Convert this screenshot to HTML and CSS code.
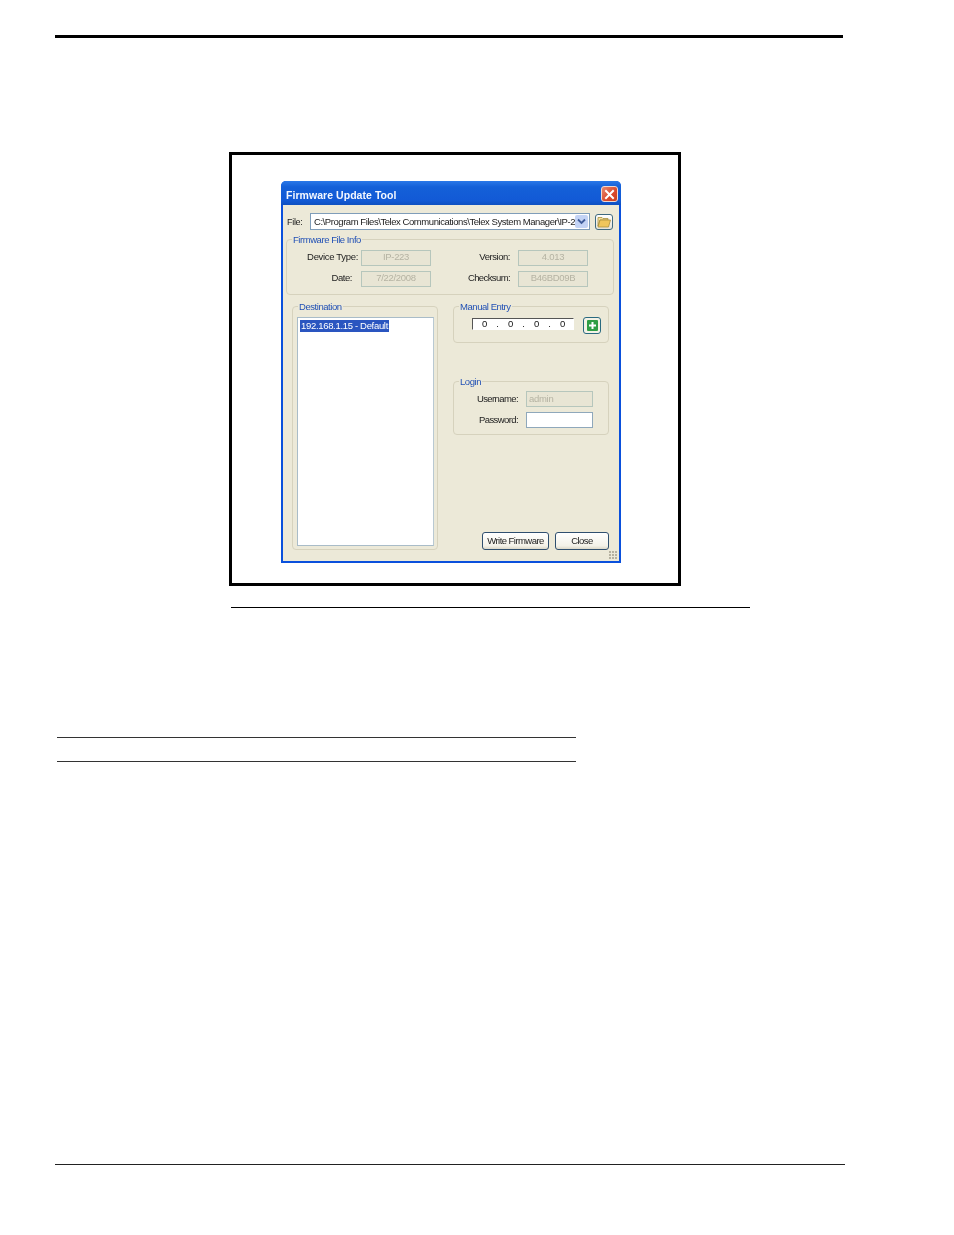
FILE: index.html
```html
<!DOCTYPE html>
<html lang="en">
<head>
<meta charset="utf-8">
<title>Firmware Update Tool</title>
<link rel="stylesheet" href="styles.css">
</head>
<body>
<div class="page">
  <hr class="rule-top">
  <div class="frame">
    <div class="dialog">
      <div class="titlebar">
        <span class="title">Firmware Update Tool</span>
        <span class="close-x">
          <svg width="17" height="17" viewBox="0 0 17 17"><path d="M5 5l7 7M12 5l-7 7" stroke="#fff" stroke-width="2" stroke-linecap="square"/></svg>
        </span>
      </div>
      <div class="body">
        <div class="file-row">
          <span class="file-label">File:</span>
          <div class="combo">
            <span class="combo-text">C:\Program Files\Telex Communications\Telex System Manager\IP-2</span>
            <span class="combo-btn">
              <svg width="9" height="7" viewBox="0 0 9 7"><path d="M1 1.500l3.500 3.500 3.500-3.500" fill="none" stroke="#3f5c9a" stroke-width="1.800"/></svg>
            </span>
          </div>
          <span class="folder-btn">
            <svg width="14" height="12" viewBox="0 0 14 12"><path d="M1 3V1.500h4l1 1h5V4H3L1 10z" fill="#f3e2a0" stroke="#a98f3e" stroke-width=".8"/><path d="M1 11l2-7h10.500l-2 7z" fill="#efc65c" stroke="#a98f3e" stroke-width=".8"/></svg>
          </span>
        </div>
        <div class="group info">
          <span class="legend">Firmware File Info</span>
          <div class="info-row">
            <span class="lbl lbl-type">Device Type:</span><span class="field">IP-223</span>
            <span class="lbl lbl-ver">Version:</span><span class="field">4.013</span>
          </div>
          <div class="info-row info-row-2">
            <span class="lbl lbl-date">Date:</span><span class="field">7/22/2008</span>
            <span class="lbl lbl-sum">Checksum:</span><span class="field">B46BD09B</span>
          </div>
        </div>
        <div class="lower">
          <div class="group dest">
            <span class="legend">Destination</span>
            <div class="listbox"><span class="selected">192.168.1.15 - Default</span></div>
          </div>
          <div class="side">
            <div class="group manual">
              <span class="legend">Manual Entry</span>
              <div class="ip-row">
                <div class="ip"><span>0</span><i>.</i><span>0</span><i>.</i><span>0</span><i>.</i><span>0</span></div>
                <span class="plus-btn">
                  <svg width="11" height="11" viewBox="0 0 11 11"><rect width="11" height="11" rx="1" fill="#2f9e44"/><path d="M5.500 2v7M2 5.500h7" stroke="#fff" stroke-width="2"/></svg>
                </span>
              </div>
            </div>
            <div class="group login">
              <span class="legend">Login</span>
              <div class="login-row"><span class="lbl">Username:</span><span class="login-field disabled">admin</span></div>
              <div class="login-row"><span class="lbl">Password:</span><span class="login-field"></span></div>
            </div>
            <div class="actions">
              <span class="btn btn-write">Write Firmware</span>
              <span class="btn btn-close">Close</span>
            </div>
          </div>
        </div>
        <span class="grip"></span>
      </div>
    </div>
  </div>
  <hr class="rule-fig">
  <hr class="rule-table rule-t1">
  <hr class="rule-table rule-t2">
  <hr class="rule-bottom">
</div>
</body>
</html>
```
FILE: styles.css
```css
* { box-sizing: border-box; }
html, body { margin: 0; padding: 0; background: #fff; }
body { font-family: "Liberation Sans", Arial, sans-serif; }
.page { width: 954px; height: 1235px; padding-top: 35px; overflow: hidden; }
hr { display: block; border: 0; margin: 0; background: #000; }
.rule-top { height: 3px; width: 788px; margin-left: 55px; }
.frame {
  width: 452px; height: 434px; margin: 114px 0 0 229px;
  border: 3px solid #000; padding: 26px 0 0 49px;
}
.rule-fig { height: 1px; width: 519px; margin: 21px 0 0 231px; }
.rule-table { height: 1px; width: 519px; margin-left: 57px; background: #333; }
.rule-t1 { margin-top: 129px; }
.rule-t2 { margin-top: 23px; }
.rule-bottom { height: 1px; width: 790px; margin: 402px 0 0 55px; background: #222; }

.dialog {
  width: 340px; height: 382px; display: flex; flex-direction: column;
  border-radius: 5px 5px 0 0; background: #0a50dc;
  padding: 0 2px 2px; filter: blur(.35px);
  font-size: 9.500px; letter-spacing: -.3px; color: #222;
}
.titlebar {
  height: 24px; flex: none; display: flex; align-items: center; justify-content: space-between;
  padding: 3px 0 0 5px; margin: 0 -2px;
  background: linear-gradient(#2a78e8, #1460d8 25%, #125ad6 80%, #0e50c0);
  border-radius: 5px 5px 0 0;
}
.title { color: #f4f8ff; font-size: 10.500px; font-weight: 700; letter-spacing: .05px; }
.close-x {
  width: 17px; height: 16px; border: 1px solid #f0d8d0; border-radius: 3px; margin: -1px 3px 0 0;
  background: linear-gradient(135deg, #e88a70, #d9482c 60%, #c8401f);
  display: flex; align-items: center; justify-content: center;
}
.close-x svg { margin: -1px; flex: none; }
.body { flex: 1; position: relative; background: #ece9d8; padding: 8px 0 0 3px; }

.file-row { display: flex; align-items: center; height: 17px; }
.file-label { width: 22px; padding-left: 1px; font-size: 9px; }
.combo {
  width: 280px; height: 17px; margin-left: 2px; background: #fff; border: 1px solid #7f9db9;
  display: flex; align-items: center; justify-content: space-between; padding: 0 0 0 3px;
}
.combo-text { font-size: 9.500px; letter-spacing: -.44px; white-space: nowrap; }
.combo-btn {
  width: 13px; height: 13px; margin-right: 1px; background: #c3d3f5; border-radius: 2px;
  display: flex; align-items: center; justify-content: center; flex: none;
}
.folder-btn {
  width: 18px; height: 16px; margin-left: 5px; border: 1px solid #3f6a80; border-radius: 3px;
  background: linear-gradient(#fff, #e6e3d6); display: flex; align-items: center; justify-content: center;
}
.folder-btn svg { flex: none; }

.group { position: relative; border: 1px solid #d6d2bd; border-radius: 4px; }
.legend {
  position: absolute; top: -6px; left: 5px; padding: 0 1px; background: #ece9d8;
  color: #2251b5; font-size: 9.500px; line-height: 11px; white-space: nowrap; letter-spacing: -.45px;
}
.info { width: 328px; height: 56px; margin: 9px 0 0 0; padding-top: 10px; }
.info-row { display: flex; align-items: center; height: 16px; }
.info-row-2 { margin-top: 5px; }
.lbl { text-align: right; white-space: nowrap; flex: none; letter-spacing: -.45px; padding-bottom: 4px; }
.lbl-type { width: 71px; margin-right: 3px; letter-spacing: -.32px; }
.lbl-date { width: 65px; margin-right: 9px; }
.lbl-ver { width: 79px; margin-right: 8px; }
.lbl-sum { width: 79px; margin-right: 8px; letter-spacing: -.6px; }
.field {
  width: 70px; height: 16px; border: 1px solid #b6c6bc; background: #e8e5d4; color: #b5b3a3;
  display: flex; align-items: center; justify-content: center; flex: none; padding-bottom: 4px;
}

.lower { display: flex; margin: 11px 0 0 6px; }
.dest { width: 146px; height: 244px; padding: 10px 0 0 4px; }
.listbox {
  width: 137px; height: 229px; background: #fff; border: 1px solid #a9bcc8;
  border-right-color: #b9c9d2; padding: 2px 0 0 2px;
}
.selected {
  display: inline-block; background: #2a55c0; color: #fff; height: 12px; line-height: 11px;
  padding: 0 1px; width: 89px; white-space: nowrap; letter-spacing: -.32px; vertical-align: top;
}
.side { width: 156px; margin-left: 15px; display: flex; flex-direction: column; }
.manual { height: 37px; padding: 9px 0 0 18px; }
.ip-row { display: flex; align-items: flex-start; height: 18px; }
.ip {
  width: 102px; height: 12px; margin-top: 2px; background: #fff; border: 1px solid #fff;
  border-left: 1px solid #555; border-top: 1px solid #555;
  display: flex; justify-content: space-between; align-items: center; padding: 0 8px 2px 9px;
  color: #111; font-size: 9.500px;
}
.ip i { font-style: normal; }
.plus-btn {
  width: 18px; height: 17px; margin: 1px 0 0 9px; border: 1.500px solid #2a6a80; border-radius: 3px;
  background: #f4f2e6; display: flex; align-items: center; justify-content: center;
}
.login { height: 54px; margin-top: 38px; padding: 9px 0 0 0; }
.login-row { display: flex; align-items: center; height: 16px; margin-bottom: 5px; }
.login-row .lbl { width: 64px; letter-spacing: -.6px; padding-bottom: 2px; }
.login-field {
  width: 67px; height: 16px; margin-left: 8px; background: #fff; border: 1px solid #8fa8bb;
  padding-left: 2px; line-height: 13px; color: #b5b3a3;
}
.login-field.disabled { background: #e8e5d4; border-color: #b6c6bc; }
.actions { display: flex; margin-top: 97px; padding-left: 29px; gap: 6px; }
.btn {
  height: 18px; border: 1px solid #2f4f6f; border-radius: 3px; display: flex;
  align-items: center; justify-content: center; color: #222; padding-bottom: 2px; letter-spacing: -.55px;
  background: linear-gradient(#fff, #f3f1e8 80%, #dcd8c8);
}
.btn-write { width: 67px; }
.btn-close { width: 54px; }
.grip {
  position: absolute; right: 1px; bottom: 1px; width: 9px; height: 9px;
  background: radial-gradient(circle at 1px 1px, #b5b1a0 .8px, transparent 1px) 0 0 / 3px 3px;
}
```
